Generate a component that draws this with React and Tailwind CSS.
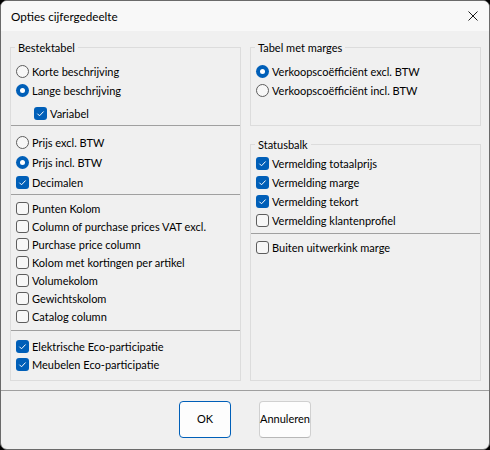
import React from "react";

const FONT = "font-['Lato','Liberation_Sans',sans-serif]";

function Box({ checked }) {
  if (checked) {
    return (
      <span className="w-[13px] h-[13px] rounded-[3px] bg-[#005fb8] shrink-0 flex items-center justify-center">
        <svg width="13" height="13" viewBox="0 0 13 13">
          <polyline points="3.4,6.7 5.5,8.8 9.6,4.5" fill="none" stroke="#ffffff" strokeWidth="1" />
        </svg>
      </span>
    );
  }
  return <span className="w-[13px] h-[13px] rounded-[3px] border border-[#5d5d5d] bg-[#f7f7f7] shrink-0" />;
}

function Dot({ checked }) {
  if (checked) {
    return (
      <span className="w-[13px] h-[13px] rounded-full bg-[#005fb8] shrink-0 flex items-center justify-center">
        <span className="w-[5px] h-[5px] rounded-full bg-white" />
      </span>
    );
  }
  return <span className="w-[13px] h-[13px] rounded-full border border-[#5d5d5d] bg-[#f7f7f7] shrink-0" />;
}

function Row({ kind, checked, label, h = "h-[19px]", extra = "" }) {
  return (
    <div className={`flex items-center ${h} ${extra}`}>
      {kind === "radio" ? <Dot checked={checked} /> : <Box checked={checked} />}
      <span className="ml-[3px] text-[11px] leading-[15px] text-black whitespace-nowrap">{label}</span>
    </div>
  );
}

function Legend({ children }) {
  return (
    <legend className="ml-[4px] px-[3px] text-[11px] leading-[15px] h-[15px] text-black">{children}</legend>
  );
}

export default function App() {
  return (
    <div className={`w-[490px] h-[450px] bg-black ${FONT}`}>
      <div className="w-[490px] h-[450px] rounded-[7px] border border-[#6a6a6a] bg-[#f0f0f0] flex flex-col overflow-hidden">
        {/* Title bar */}
        <div className="h-[30px] bg-[#f8f8f8] flex items-center justify-between pl-[10px] pr-[10px] shrink-0">
          <span className="text-[11.7px] text-black leading-[16px]">Opties cijfergedeelte</span>
          <svg width="10" height="10" viewBox="0 0 10 10" className="mr-[1px]">
            <line x1="0.5" y1="0.5" x2="9.5" y2="9.5" stroke="#1a1a1a" strokeWidth="1" />
            <line x1="9.5" y1="0.5" x2="0.5" y2="9.5" stroke="#1a1a1a" strokeWidth="1" />
          </svg>
        </div>

        {/* Body */}
        <div className="flex pt-[9px] pl-[9px] gap-[9px] shrink-0">
          {/* Left column */}
          <fieldset className="w-[231px] h-[341px] border border-[#dcdcdc] p-0 m-0 min-w-0">
            <Legend>Bestektabel</Legend>
            <div className="h-[70px] pt-[7px] pl-[5px] flex flex-col">
              <Row kind="radio" checked={false} label="Korte beschrijving" />
              <Row kind="radio" checked={true} label="Lange beschrijving" />
              <Row kind="check" checked={true} label="Variabel" extra="mt-[4px] ml-[18px]" />
            </div>
            <div className="h-px bg-[#a0a0a0]" />
            <div className="h-[68px] pt-[6px] pl-[5px] flex flex-col">
              <Row kind="radio" checked={false} label="Prijs excl. BTW" h="h-[20px]" />
              <Row kind="radio" checked={true} label="Prijs incl. BTW" h="h-[20px]" />
              <Row kind="check" checked={true} label="Decimalen" h="h-[20px]" />
            </div>
            <div className="h-px bg-[#a0a0a0]" />
            <div className="h-[135px] pt-[4px] pl-[5px] flex flex-col">
              <Row kind="check" checked={false} label="Punten Kolom" h="h-[18px]" />
              <Row kind="check" checked={false} label="Column of purchase prices VAT excl." h="h-[18px]" />
              <Row kind="check" checked={false} label="Purchase price column" h="h-[18px]" />
              <Row kind="check" checked={false} label="Kolom met kortingen per artikel" h="h-[18px]" />
              <Row kind="check" checked={false} label="Volumekolom" h="h-[18px]" />
              <Row kind="check" checked={false} label="Gewichtskolom" h="h-[18px]" />
              <Row kind="check" checked={false} label="Catalog column" h="h-[18px]" />
            </div>
            <div className="h-px bg-[#a0a0a0]" />
            <div className="h-[49px] pt-[6px] pl-[5px] flex flex-col">
              <Row kind="check" checked={true} label="Elektrische Eco-participatie" h="h-[18px]" />
              <Row kind="check" checked={true} label="Meubelen Eco-participatie" h="h-[18px]" />
            </div>
          </fieldset>

          {/* Right column */}
          <div className="w-[231px] flex flex-col">
            <fieldset className="h-[86px] border border-[#dcdcdc] p-0 m-0 min-w-0">
              <Legend>Tabel met marges</Legend>
              <div className="h-[70px] pt-[7px] pl-[5px] flex flex-col">
                <Row kind="radio" checked={true} label="Verkoopscoëfficiënt excl. BTW" />
                <Row kind="radio" checked={false} label="Verkoopscoëfficiënt incl. BTW" />
              </div>
            </fieldset>
            <fieldset className="mt-[11px] h-[244px] border border-[#dcdcdc] p-0 m-0 min-w-0">
              <Legend>Statusbalk</Legend>
              <div className="h-[81px] pt-[2px] pl-[5px] flex flex-col">
                <Row kind="check" checked={true} label="Vermelding totaalprijs" />
                <Row kind="check" checked={true} label="Vermelding marge" />
                <Row kind="check" checked={true} label="Vermelding tekort" />
                <Row kind="check" checked={false} label="Vermelding klantenprofiel" />
              </div>
              <div className="h-px bg-[#a0a0a0]" />
              <div className="h-[146px] pt-[4px] pl-[5px] flex flex-col">
                <Row kind="check" checked={false} label="Buiten uitwerkink marge" />
              </div>
            </fieldset>
          </div>
        </div>

        {/* Footer */}
        <div className="mt-[9px] h-px bg-[#a0a0a0] shrink-0" />
        <div className="flex justify-center gap-[28px] pt-[10px]">
          <button className="w-[52px] h-[37px] rounded-[4px] border border-[#005fb8] bg-[#fdfdfd] text-[11px] text-black">
            OK
          </button>
          <button className="w-[52px] h-[37px] rounded-[4px] border border-[#d0d0d0] border-b-[#b8b8b8] bg-[#fdfdfd] text-[11px] text-black whitespace-nowrap px-0">
            Annuleren
          </button>
        </div>
      </div>
    </div>
  );
}
